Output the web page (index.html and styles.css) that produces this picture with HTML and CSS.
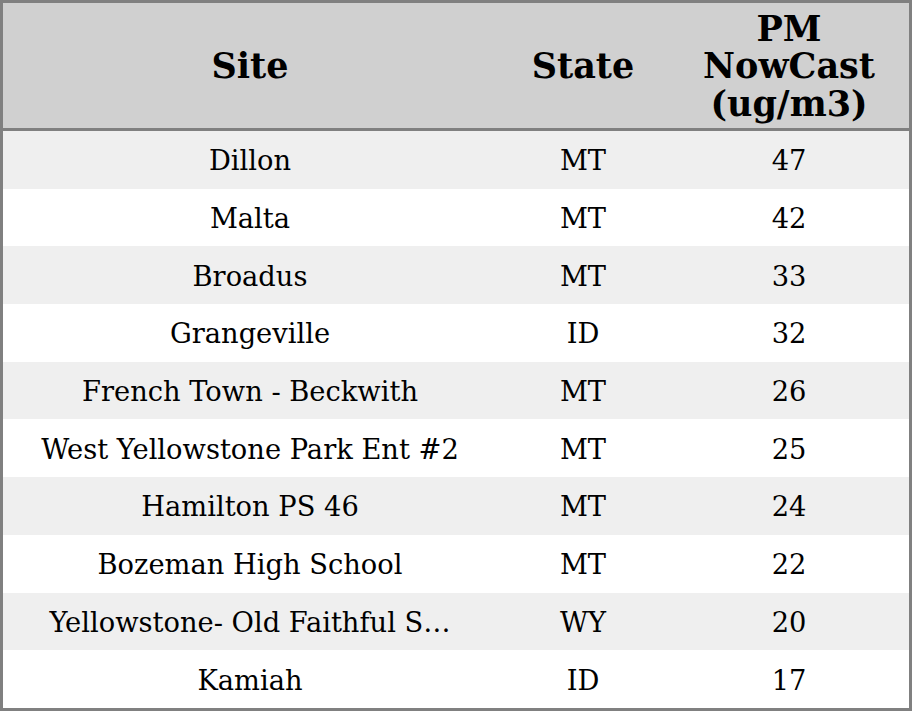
FILE: index.html
```html
<!DOCTYPE html>
<html>
<head>
<meta charset="utf-8">
<link rel="stylesheet" href="styles.css">
</head>
<body>
<table class="grid">
  <colgroup>
    <col class="c-site">
    <col class="c-state">
    <col class="c-pm">
  </colgroup>
  <thead>
    <tr><th>Site</th><th>State</th><th>PM<br>NowCast<br>(ug/m3)</th></tr>
  </thead>
  <tbody>
    <tr><td>Dillon</td><td>MT</td><td>47</td></tr>
    <tr><td>Malta</td><td>MT</td><td>42</td></tr>
    <tr><td>Broadus</td><td>MT</td><td>33</td></tr>
    <tr><td>Grangeville</td><td>ID</td><td>32</td></tr>
    <tr><td>French Town - Beckwith</td><td>MT</td><td>26</td></tr>
    <tr><td>West Yellowstone Park Ent #2</td><td>MT</td><td>25</td></tr>
    <tr><td>Hamilton PS 46</td><td>MT</td><td>24</td></tr>
    <tr><td>Bozeman High School</td><td>MT</td><td>22</td></tr>
    <tr><td>Yellowstone- Old Faithful S…</td><td>WY</td><td>20</td></tr>
    <tr><td>Kamiah</td><td>ID</td><td>17</td></tr>
  </tbody>
</table>
</body>
</html>
```
FILE: styles.css
```css
html, body {
  margin: 0;
  padding: 0;
  background: #ffffff;
}
.grid {
  width: 912px;
  height: 711px;
  box-sizing: border-box;
  border: 3px solid #808080;
  border-collapse: separate;
  border-spacing: 0;
  table-layout: fixed;
  font-family: "DejaVu Serif", serif;
  color: #000;
}
.c-site { width: 494px; }
.c-state { width: 172px; }
.c-pm { width: 240px; }
.grid th {
  height: 124px;
  padding: 1px 0 0 0;
  background: #d0d0d0;
  border-bottom: 3px solid #808080;
  font-size: 35px;
  font-weight: bold;
  line-height: 37.5px;
  text-align: center;
  vertical-align: middle;
}
.grid td {
  height: 55.7px;
  padding: 2px 0 0 0;
  font-size: 27.3px;
  text-align: center;
  vertical-align: middle;
  white-space: nowrap;
}
.grid tbody tr:nth-child(odd) td {
  background: #efefef;
}
```
